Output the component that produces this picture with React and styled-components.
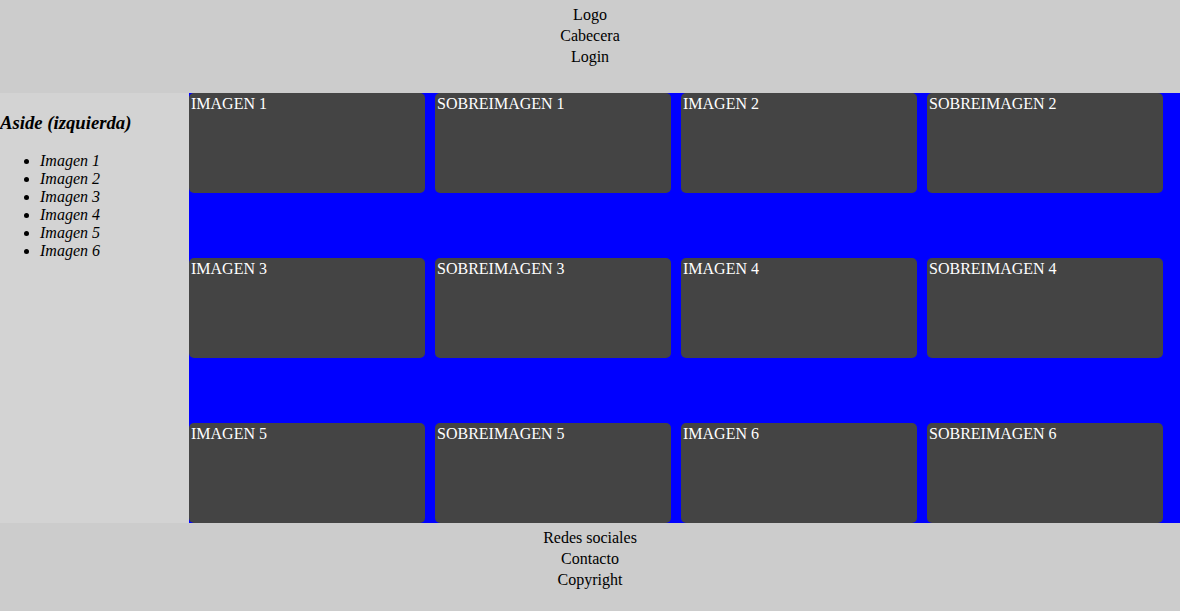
import React from "react";
import styled, { createGlobalStyle } from "styled-components";

const Global = createGlobalStyle`
  html, body { margin: 0; padding: 0; }
  body {
    font-family: "Liberation Serif", "Times New Roman", serif;
    font-size: 16px;
    color: #000;
    background: #fff;
  }
`;

const Page = styled.div`
  display: grid;
  grid-template-rows: 93px 430px 88px;
  grid-template-columns: 189px 1fr;
  grid-template-areas:
    "header header"
    "aside main"
    "footer footer";
  width: 1180px;
  height: 611px;
`;

const Bar = styled.div`
  grid-area: ${(p) => p.$area};
  background: #cccccc;
  display: flex;
  flex-direction: column;
  align-items: center;
  padding-top: 4px;
  line-height: 21px;
  box-sizing: border-box;
`;

const Aside = styled.aside`
  grid-area: aside;
  background: #d3d3d3;
`;

const AsideTitle = styled.h3`
  margin: 18.72px 0;
  font-size: 18.72px;
  font-style: italic;
  font-weight: bold;
`;

const List = styled.ul`
  margin: 0;
  padding-left: 40px;
  font-style: italic;
`;

const Main = styled.main`
  grid-area: main;
  background: #0000ff;
  display: grid;
  grid-template-columns: repeat(4, 236px);
  grid-template-rows: repeat(3, 100px);
  column-gap: 10px;
  row-gap: 65px;
`;

const Card = styled.div`
  background: #444444;
  color: #ffffff;
  border-radius: 5px;
  padding: 2px 2px;
  line-height: 18px;
`;

const cards = [];
for (let i = 1; i <= 6; i++) {
  cards.push(`IMAGEN ${i}`);
  cards.push(`SOBREIMAGEN ${i}`);
}

export default function App() {
  return (
    <>
      <Global />
      <Page>
        <Bar $area="header">
          <div>Logo</div>
          <div>Cabecera</div>
          <div>Login</div>
        </Bar>
        <Aside>
          <AsideTitle>Aside (izquierda)</AsideTitle>
          <List>
            {[1, 2, 3, 4, 5, 6].map((n) => (
              <li key={n}>Imagen {n}</li>
            ))}
          </List>
        </Aside>
        <Main>
          {cards.map((c) => (
            <Card key={c}>{c}</Card>
          ))}
        </Main>
        <Bar $area="footer">
          <div>Redes sociales</div>
          <div>Contacto</div>
          <div>Copyright</div>
        </Bar>
      </Page>
    </>
  );
}
